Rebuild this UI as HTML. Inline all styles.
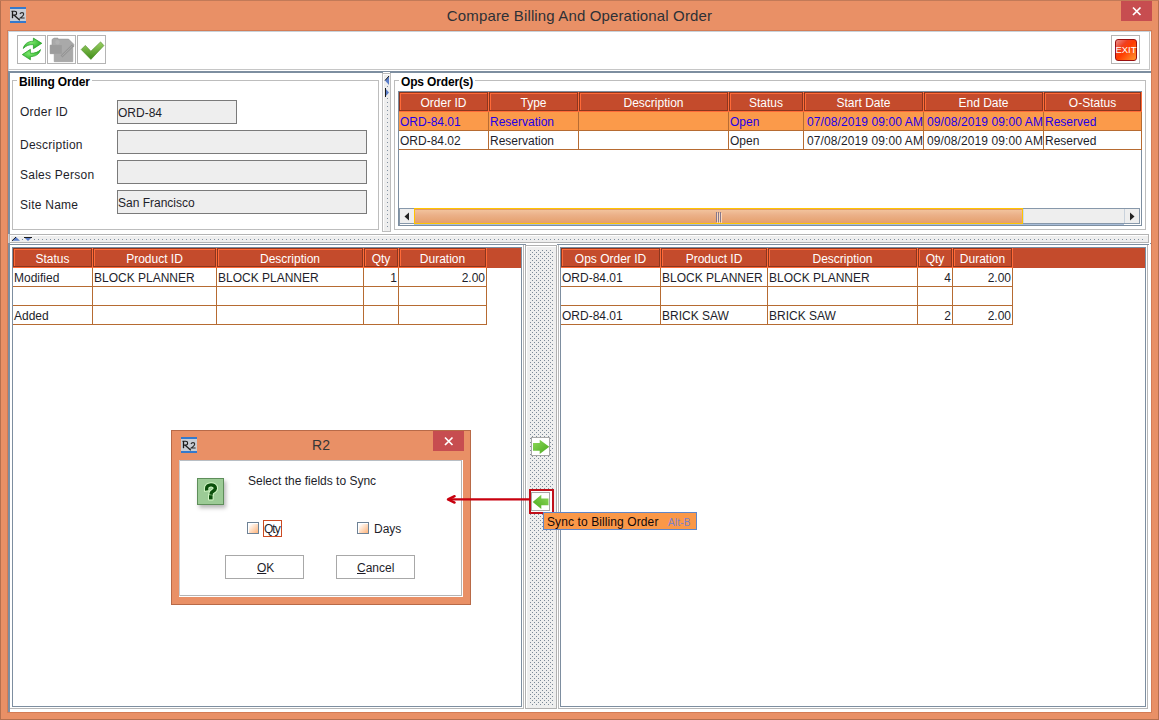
<!DOCTYPE html>
<html><head><meta charset="utf-8">
<style>
*{margin:0;padding:0;box-sizing:border-box}
html,body{width:1159px;height:720px;overflow:hidden}
body{position:relative;background:#E99066;font-family:"Liberation Sans",sans-serif;font-size:12px;color:#1E1E2A}
.a{position:absolute}
.t{font-size:12px;line-height:14px;white-space:nowrap}
.b{font-weight:bold;color:#000;letter-spacing:-0.15px}
</style></head><body>
<div class="a" style="left:0px;top:0px;width:1159px;height:720px;background:#E99066;"></div>
<div class="a" style="left:0px;top:0px;width:1px;height:720px;background:#B5704F;"></div>
<div class="a" style="left:1158px;top:0px;width:1px;height:720px;background:#B5704F;"></div>
<div class="a" style="left:0px;top:719px;width:1159px;height:1px;background:#B5704F;"></div>
<div class="a" style="left:0px;top:0px;width:1159px;height:1px;background:#C27A58;"></div>
<svg class="a" style="left:10px;top:7px" width="16" height="16" viewBox="0 0 16 16">
<rect x="0" y="0" width="16" height="16" fill="#C9CDD4"/>
<rect x="0" y="0" width="16" height="2" fill="#3479CC"/><rect x="0" y="14" width="16" height="2" fill="#3479CC"/>
<path d="M2.5 4 L2.5 11.2" stroke="#1A1A1A" stroke-width="1.3"/>
<path d="M1.5 4.3 L4.6 4.3 Q6.6 4.3 6.6 6.2 Q6.6 8.1 4.6 8.1 L2.5 8.1" fill="none" stroke="#1A1A1A" stroke-width="1.1"/>
<path d="M4.2 8.3 L9.8 13.2" stroke="#1A1A1A" stroke-width="1.2"/>
<path d="M10 7 Q10.4 5.6 12 5.6 Q13.7 5.6 13.7 7.1 Q13.7 8.4 12 9.6 L10.2 11 L14.6 11" fill="none" stroke="#2A2A2A" stroke-width="1.1"/>
</svg>
<div class="a" style="left:0;top:7px;width:1159px;text-align:center;font-size:15px;line-height:18px;color:#2E3036;letter-spacing:0.14px">Compare Billing And Operational Order</div>
<div class="a" style="left:1121px;top:1px;width:31px;height:20px;background:#C74D50;"></div>
<svg class="a" style="left:1121px;top:1px" width="31" height="20"><path d="M12 6.5 L19.5 14 M19.5 6.5 L12 14" stroke="#fff" stroke-width="1.7"/></svg>
<div class="a" style="left:7px;top:30px;width:1145px;height:683px;background:#D47C55;"></div>
<div class="a" style="left:8px;top:31px;width:1143px;height:681px;background:#C8D2DA;"></div>
<div class="a" style="left:9px;top:32px;width:1142px;height:680px;background:#FFFFFF;"></div>
<div class="a" style="left:8px;top:69px;width:1142px;height:1px;background:#C6C6C6;"></div>
<div class="a" style="left:1149px;top:31px;width:1px;height:39px;background:#C6C6C6;"></div>
<div class="a" style="left:8px;top:71px;width:1143px;height:2px;background:#7D8EA0;"></div>
<div class="a" style="left:17px;top:35px;width:29px;height:29px;border:1px solid #B4B4B4;"></div>
<div class="a" style="left:47px;top:35px;width:29px;height:29px;border:1px solid #B4B4B4;"></div>
<div class="a" style="left:77px;top:35px;width:29px;height:29px;border:1px solid #B4B4B4;"></div>
<div class="a" style="left:1111px;top:35px;width:29px;height:29px;border:1px solid #B4B4B4;"></div>
<svg class="a" style="left:18px;top:36px" width="27" height="27" viewBox="0 0 27 27">
<defs><radialGradient id="gr" cx="0.4" cy="0.4" r="0.7"><stop offset="0" stop-color="#7FEA6F"/><stop offset="1" stop-color="#1FA51F"/></radialGradient></defs>
<path d="M15.4 2.1 L23.8 7.3 L15.4 12.7 L15.4 8.6 C11 8.4 8 9.8 5.3 12.5 C6 8.5 9.5 5.3 15.4 5.2 Z" fill="url(#gr)" stroke="#1E9A1E" stroke-width="0.7" stroke-linejoin="round"/>
<path d="M12.4 13.3 L4.3 18.6 L12.4 23.8 L12.4 20.6 C17 20.6 21.5 18.5 22.5 13.6 C20 16.3 17 17.3 12.4 17.3 Z" fill="url(#gr)" stroke="#1E9A1E" stroke-width="0.7" stroke-linejoin="round"/>
</svg>
<svg class="a" style="left:48px;top:36px" width="27" height="27" viewBox="0 0 27 27">
<path d="M4 3.5 L6 2.1 L10 2.1 L10 3.1 L20.6 3.1 L25.8 8.3 L25.8 10.7 L24.8 10.7 L24.8 25.7 L6.2 25.7 L6.2 17.7 L2.1 17.7 L2.1 9.1 L4 9.1 Z" fill="#A9A9A9" stroke="#999" stroke-width="0.6"/>
<rect x="2.1" y="9.1" width="11.7" height="8.6" fill="#9C9C9C"/>
<circle cx="9.5" cy="6.3" r="2.2" fill="#B2B2B2"/>
<path d="M13.5 20.5 L25 9.3" stroke="#959595" stroke-width="2.6"/>
<path d="M14.2 19.8 L24.3 10" stroke="#B0B0B0" stroke-width="0.8"/>
</svg>
<svg class="a" style="left:78px;top:36px" width="27" height="27" viewBox="0 0 27 27">
<defs><linearGradient id="gc" x1="0" y1="0" x2="0" y2="1"><stop offset="0" stop-color="#9ACF62"/><stop offset="1" stop-color="#3F8C18"/></linearGradient></defs>
<path d="M3.2 13.5 L7.3 9.4 L12.9 15.2 L22.6 5.9 L25.9 9.6 L12.9 23.4 Z" fill="url(#gc)" stroke="#4A8A22" stroke-width="0.6" stroke-linejoin="round"/>
</svg>
<div class="a" style="left:1115px;top:39px;width:22px;height:22px;border-radius:3px;background:linear-gradient(135deg,#E89090 0%,#F04020 30%,#FF3C00 50%,#FF9A30 100%);border:1px solid #9A1010"></div>
<div class="a" style="left:1115px;top:43px;width:22px;text-align:center;font-size:9.5px;line-height:14px;color:#fff;letter-spacing:0px">EXIT</div>
<div class="a" style="left:8px;top:71px;width:2px;height:163px;background:#7D8EA0;"></div>
<div class="a" style="left:8px;top:243px;width:2px;height:469px;background:#7D8EA0;"></div>
<div class="a" style="left:12px;top:80px;width:367px;height:150px;border:1px solid #BDBDBD;"></div>
<div class="a t b" style="left:17px;top:75px;padding:0 2px;background:#fff">Billing Order</div>
<div class="a t " style="left:20px;top:105px;letter-spacing:0.25px">Order ID</div>
<div class="a t " style="left:20px;top:138px;letter-spacing:0.25px">Description</div>
<div class="a t " style="left:20px;top:168px;letter-spacing:0.25px">Sales Person</div>
<div class="a t " style="left:20px;top:198px;letter-spacing:0.25px">Site Name</div>
<div class="a" style="left:117px;top:100px;width:120px;height:24px;background:#EEEEEE;border:1px solid #7A7A7A;"></div>
<div class="a" style="left:117px;top:130px;width:250px;height:24px;background:#EEEEEE;border:1px solid #7A7A7A;"></div>
<div class="a" style="left:117px;top:160px;width:250px;height:24px;background:#EEEEEE;border:1px solid #7A7A7A;"></div>
<div class="a" style="left:117px;top:190px;width:250px;height:24px;background:#EEEEEE;border:1px solid #7A7A7A;"></div>
<div class="a t " style="left:118px;top:106px;">ORD-84</div>
<div class="a t " style="left:118px;top:196px;">San Francisco</div>
<div class="a" style="left:382px;top:73px;width:9px;height:159px;background:#EEEEEE;border:1px solid #BDBDBD;box-shadow:inset 1px 1px 0 #FFFFFF;"></div>
<div class="a" style="left:383px;top:72px;width:7px;height:1px;background:#FFFFFF;"></div>
<svg class="a" style="left:383px;top:74px" width="8" height="156"><path d="M6 2 L2 6.5 L6 11 Z" fill="#5A7DC8"/><path d="M6 2 L2 6.5" stroke="#1a1a1a" stroke-width="1"/><path d="M2 14 L6 18.5 L2 23 Z" fill="#5A7DC8"/><path d="M2.5 14 L2.5 23" stroke="#1a1a1a" stroke-width="1"/><rect x="4" y="12" width="1" height="1" fill="#8090A0"/><rect x="4" y="24" width="1" height="1" fill="#8090A0"/><rect x="4" y="28" width="1" height="1" fill="#8090A0"/><rect x="4" y="32" width="1" height="1" fill="#8090A0"/><rect x="4" y="36" width="1" height="1" fill="#8090A0"/><rect x="4" y="40" width="1" height="1" fill="#8090A0"/><rect x="4" y="44" width="1" height="1" fill="#8090A0"/><rect x="4" y="48" width="1" height="1" fill="#8090A0"/><rect x="4" y="52" width="1" height="1" fill="#8090A0"/><rect x="4" y="56" width="1" height="1" fill="#8090A0"/><rect x="4" y="60" width="1" height="1" fill="#8090A0"/><rect x="4" y="64" width="1" height="1" fill="#8090A0"/><rect x="4" y="68" width="1" height="1" fill="#8090A0"/><rect x="4" y="72" width="1" height="1" fill="#8090A0"/><rect x="4" y="76" width="1" height="1" fill="#8090A0"/><rect x="4" y="80" width="1" height="1" fill="#8090A0"/><rect x="4" y="84" width="1" height="1" fill="#8090A0"/><rect x="4" y="88" width="1" height="1" fill="#8090A0"/><rect x="4" y="92" width="1" height="1" fill="#8090A0"/><rect x="4" y="96" width="1" height="1" fill="#8090A0"/><rect x="4" y="100" width="1" height="1" fill="#8090A0"/><rect x="4" y="104" width="1" height="1" fill="#8090A0"/><rect x="4" y="108" width="1" height="1" fill="#8090A0"/><rect x="4" y="112" width="1" height="1" fill="#8090A0"/><rect x="4" y="116" width="1" height="1" fill="#8090A0"/><rect x="4" y="120" width="1" height="1" fill="#8090A0"/><rect x="4" y="124" width="1" height="1" fill="#8090A0"/><rect x="4" y="128" width="1" height="1" fill="#8090A0"/><rect x="4" y="132" width="1" height="1" fill="#8090A0"/><rect x="4" y="136" width="1" height="1" fill="#8090A0"/><rect x="4" y="140" width="1" height="1" fill="#8090A0"/><rect x="4" y="144" width="1" height="1" fill="#8090A0"/><rect x="4" y="148" width="1" height="1" fill="#8090A0"/><rect x="4" y="152" width="1" height="1" fill="#8090A0"/></svg>
<div class="a" style="left:394px;top:80px;width:752px;height:150px;border:1px solid #BDBDBD;"></div>
<div class="a t b" style="left:399px;top:75px;padding:0 2px;background:#fff">Ops Order(s)</div>
<div class="a" style="left:9px;top:234px;width:1140px;height:9px;background:#EEEEEE;border:1px solid #B4B4B4;box-shadow:inset 1px 1px 0 #FFFFFF;"></div>
<div class="a" style="left:8px;top:244px;width:518px;height:1px;background:#7D8EA0;"></div>
<div class="a" style="left:557px;top:244px;width:592px;height:1px;background:#7D8EA0;"></div>
<div class="a" style="left:1150px;top:243px;width:1px;height:1px;background:#7D8EA0;"></div>
<svg class="a" style="left:9px;top:234px" width="1140" height="9"><path d="M3 6.8 L7 3 L11 6.8 Z" fill="#5A7DC8"/><path d="M3 6.8 L7 3" stroke="#1a1a1a" stroke-width="1"/><path d="M15 3.2 L19 7 L23 3.2 Z" fill="#5A7DC8"/><path d="M15 3.5 L23 3.5" stroke="#1a1a1a" stroke-width="1"/><rect x="13" y="5" width="1" height="1" fill="#8090A0"/><rect x="25" y="5" width="1" height="1" fill="#8090A0"/><rect x="29" y="5" width="1" height="1" fill="#8090A0"/><rect x="33" y="5" width="1" height="1" fill="#8090A0"/><rect x="37" y="5" width="1" height="1" fill="#8090A0"/><rect x="41" y="5" width="1" height="1" fill="#8090A0"/><rect x="45" y="5" width="1" height="1" fill="#8090A0"/><rect x="49" y="5" width="1" height="1" fill="#8090A0"/><rect x="53" y="5" width="1" height="1" fill="#8090A0"/><rect x="57" y="5" width="1" height="1" fill="#8090A0"/><rect x="61" y="5" width="1" height="1" fill="#8090A0"/><rect x="65" y="5" width="1" height="1" fill="#8090A0"/><rect x="69" y="5" width="1" height="1" fill="#8090A0"/><rect x="73" y="5" width="1" height="1" fill="#8090A0"/><rect x="77" y="5" width="1" height="1" fill="#8090A0"/><rect x="81" y="5" width="1" height="1" fill="#8090A0"/><rect x="85" y="5" width="1" height="1" fill="#8090A0"/><rect x="89" y="5" width="1" height="1" fill="#8090A0"/><rect x="93" y="5" width="1" height="1" fill="#8090A0"/><rect x="97" y="5" width="1" height="1" fill="#8090A0"/><rect x="101" y="5" width="1" height="1" fill="#8090A0"/><rect x="105" y="5" width="1" height="1" fill="#8090A0"/><rect x="109" y="5" width="1" height="1" fill="#8090A0"/><rect x="113" y="5" width="1" height="1" fill="#8090A0"/><rect x="117" y="5" width="1" height="1" fill="#8090A0"/><rect x="121" y="5" width="1" height="1" fill="#8090A0"/><rect x="125" y="5" width="1" height="1" fill="#8090A0"/><rect x="129" y="5" width="1" height="1" fill="#8090A0"/><rect x="133" y="5" width="1" height="1" fill="#8090A0"/><rect x="137" y="5" width="1" height="1" fill="#8090A0"/><rect x="141" y="5" width="1" height="1" fill="#8090A0"/><rect x="145" y="5" width="1" height="1" fill="#8090A0"/><rect x="149" y="5" width="1" height="1" fill="#8090A0"/><rect x="153" y="5" width="1" height="1" fill="#8090A0"/><rect x="157" y="5" width="1" height="1" fill="#8090A0"/><rect x="161" y="5" width="1" height="1" fill="#8090A0"/><rect x="165" y="5" width="1" height="1" fill="#8090A0"/><rect x="169" y="5" width="1" height="1" fill="#8090A0"/><rect x="173" y="5" width="1" height="1" fill="#8090A0"/><rect x="177" y="5" width="1" height="1" fill="#8090A0"/><rect x="181" y="5" width="1" height="1" fill="#8090A0"/><rect x="185" y="5" width="1" height="1" fill="#8090A0"/><rect x="189" y="5" width="1" height="1" fill="#8090A0"/><rect x="193" y="5" width="1" height="1" fill="#8090A0"/><rect x="197" y="5" width="1" height="1" fill="#8090A0"/><rect x="201" y="5" width="1" height="1" fill="#8090A0"/><rect x="205" y="5" width="1" height="1" fill="#8090A0"/><rect x="209" y="5" width="1" height="1" fill="#8090A0"/><rect x="213" y="5" width="1" height="1" fill="#8090A0"/><rect x="217" y="5" width="1" height="1" fill="#8090A0"/><rect x="221" y="5" width="1" height="1" fill="#8090A0"/><rect x="225" y="5" width="1" height="1" fill="#8090A0"/><rect x="229" y="5" width="1" height="1" fill="#8090A0"/><rect x="233" y="5" width="1" height="1" fill="#8090A0"/><rect x="237" y="5" width="1" height="1" fill="#8090A0"/><rect x="241" y="5" width="1" height="1" fill="#8090A0"/><rect x="245" y="5" width="1" height="1" fill="#8090A0"/><rect x="249" y="5" width="1" height="1" fill="#8090A0"/><rect x="253" y="5" width="1" height="1" fill="#8090A0"/><rect x="257" y="5" width="1" height="1" fill="#8090A0"/><rect x="261" y="5" width="1" height="1" fill="#8090A0"/><rect x="265" y="5" width="1" height="1" fill="#8090A0"/><rect x="269" y="5" width="1" height="1" fill="#8090A0"/><rect x="273" y="5" width="1" height="1" fill="#8090A0"/><rect x="277" y="5" width="1" height="1" fill="#8090A0"/><rect x="281" y="5" width="1" height="1" fill="#8090A0"/><rect x="285" y="5" width="1" height="1" fill="#8090A0"/><rect x="289" y="5" width="1" height="1" fill="#8090A0"/><rect x="293" y="5" width="1" height="1" fill="#8090A0"/><rect x="297" y="5" width="1" height="1" fill="#8090A0"/><rect x="301" y="5" width="1" height="1" fill="#8090A0"/><rect x="305" y="5" width="1" height="1" fill="#8090A0"/><rect x="309" y="5" width="1" height="1" fill="#8090A0"/><rect x="313" y="5" width="1" height="1" fill="#8090A0"/><rect x="317" y="5" width="1" height="1" fill="#8090A0"/><rect x="321" y="5" width="1" height="1" fill="#8090A0"/><rect x="325" y="5" width="1" height="1" fill="#8090A0"/><rect x="329" y="5" width="1" height="1" fill="#8090A0"/><rect x="333" y="5" width="1" height="1" fill="#8090A0"/><rect x="337" y="5" width="1" height="1" fill="#8090A0"/><rect x="341" y="5" width="1" height="1" fill="#8090A0"/><rect x="345" y="5" width="1" height="1" fill="#8090A0"/><rect x="349" y="5" width="1" height="1" fill="#8090A0"/><rect x="353" y="5" width="1" height="1" fill="#8090A0"/><rect x="357" y="5" width="1" height="1" fill="#8090A0"/><rect x="361" y="5" width="1" height="1" fill="#8090A0"/><rect x="365" y="5" width="1" height="1" fill="#8090A0"/><rect x="369" y="5" width="1" height="1" fill="#8090A0"/><rect x="373" y="5" width="1" height="1" fill="#8090A0"/><rect x="377" y="5" width="1" height="1" fill="#8090A0"/><rect x="381" y="5" width="1" height="1" fill="#8090A0"/><rect x="385" y="5" width="1" height="1" fill="#8090A0"/><rect x="389" y="5" width="1" height="1" fill="#8090A0"/><rect x="393" y="5" width="1" height="1" fill="#8090A0"/><rect x="397" y="5" width="1" height="1" fill="#8090A0"/><rect x="401" y="5" width="1" height="1" fill="#8090A0"/><rect x="405" y="5" width="1" height="1" fill="#8090A0"/><rect x="409" y="5" width="1" height="1" fill="#8090A0"/><rect x="413" y="5" width="1" height="1" fill="#8090A0"/><rect x="417" y="5" width="1" height="1" fill="#8090A0"/><rect x="421" y="5" width="1" height="1" fill="#8090A0"/><rect x="425" y="5" width="1" height="1" fill="#8090A0"/><rect x="429" y="5" width="1" height="1" fill="#8090A0"/><rect x="433" y="5" width="1" height="1" fill="#8090A0"/><rect x="437" y="5" width="1" height="1" fill="#8090A0"/><rect x="441" y="5" width="1" height="1" fill="#8090A0"/><rect x="445" y="5" width="1" height="1" fill="#8090A0"/><rect x="449" y="5" width="1" height="1" fill="#8090A0"/><rect x="453" y="5" width="1" height="1" fill="#8090A0"/><rect x="457" y="5" width="1" height="1" fill="#8090A0"/><rect x="461" y="5" width="1" height="1" fill="#8090A0"/><rect x="465" y="5" width="1" height="1" fill="#8090A0"/><rect x="469" y="5" width="1" height="1" fill="#8090A0"/><rect x="473" y="5" width="1" height="1" fill="#8090A0"/><rect x="477" y="5" width="1" height="1" fill="#8090A0"/><rect x="481" y="5" width="1" height="1" fill="#8090A0"/><rect x="485" y="5" width="1" height="1" fill="#8090A0"/><rect x="489" y="5" width="1" height="1" fill="#8090A0"/><rect x="493" y="5" width="1" height="1" fill="#8090A0"/><rect x="497" y="5" width="1" height="1" fill="#8090A0"/><rect x="501" y="5" width="1" height="1" fill="#8090A0"/><rect x="505" y="5" width="1" height="1" fill="#8090A0"/><rect x="509" y="5" width="1" height="1" fill="#8090A0"/><rect x="513" y="5" width="1" height="1" fill="#8090A0"/><rect x="517" y="5" width="1" height="1" fill="#8090A0"/><rect x="521" y="5" width="1" height="1" fill="#8090A0"/><rect x="525" y="5" width="1" height="1" fill="#8090A0"/><rect x="529" y="5" width="1" height="1" fill="#8090A0"/><rect x="533" y="5" width="1" height="1" fill="#8090A0"/><rect x="537" y="5" width="1" height="1" fill="#8090A0"/><rect x="541" y="5" width="1" height="1" fill="#8090A0"/><rect x="545" y="5" width="1" height="1" fill="#8090A0"/><rect x="549" y="5" width="1" height="1" fill="#8090A0"/><rect x="553" y="5" width="1" height="1" fill="#8090A0"/><rect x="557" y="5" width="1" height="1" fill="#8090A0"/><rect x="561" y="5" width="1" height="1" fill="#8090A0"/><rect x="565" y="5" width="1" height="1" fill="#8090A0"/><rect x="569" y="5" width="1" height="1" fill="#8090A0"/><rect x="573" y="5" width="1" height="1" fill="#8090A0"/><rect x="577" y="5" width="1" height="1" fill="#8090A0"/><rect x="581" y="5" width="1" height="1" fill="#8090A0"/><rect x="585" y="5" width="1" height="1" fill="#8090A0"/><rect x="589" y="5" width="1" height="1" fill="#8090A0"/><rect x="593" y="5" width="1" height="1" fill="#8090A0"/><rect x="597" y="5" width="1" height="1" fill="#8090A0"/><rect x="601" y="5" width="1" height="1" fill="#8090A0"/><rect x="605" y="5" width="1" height="1" fill="#8090A0"/><rect x="609" y="5" width="1" height="1" fill="#8090A0"/><rect x="613" y="5" width="1" height="1" fill="#8090A0"/><rect x="617" y="5" width="1" height="1" fill="#8090A0"/><rect x="621" y="5" width="1" height="1" fill="#8090A0"/><rect x="625" y="5" width="1" height="1" fill="#8090A0"/><rect x="629" y="5" width="1" height="1" fill="#8090A0"/><rect x="633" y="5" width="1" height="1" fill="#8090A0"/><rect x="637" y="5" width="1" height="1" fill="#8090A0"/><rect x="641" y="5" width="1" height="1" fill="#8090A0"/><rect x="645" y="5" width="1" height="1" fill="#8090A0"/><rect x="649" y="5" width="1" height="1" fill="#8090A0"/><rect x="653" y="5" width="1" height="1" fill="#8090A0"/><rect x="657" y="5" width="1" height="1" fill="#8090A0"/><rect x="661" y="5" width="1" height="1" fill="#8090A0"/><rect x="665" y="5" width="1" height="1" fill="#8090A0"/><rect x="669" y="5" width="1" height="1" fill="#8090A0"/><rect x="673" y="5" width="1" height="1" fill="#8090A0"/><rect x="677" y="5" width="1" height="1" fill="#8090A0"/><rect x="681" y="5" width="1" height="1" fill="#8090A0"/><rect x="685" y="5" width="1" height="1" fill="#8090A0"/><rect x="689" y="5" width="1" height="1" fill="#8090A0"/><rect x="693" y="5" width="1" height="1" fill="#8090A0"/><rect x="697" y="5" width="1" height="1" fill="#8090A0"/><rect x="701" y="5" width="1" height="1" fill="#8090A0"/><rect x="705" y="5" width="1" height="1" fill="#8090A0"/><rect x="709" y="5" width="1" height="1" fill="#8090A0"/><rect x="713" y="5" width="1" height="1" fill="#8090A0"/><rect x="717" y="5" width="1" height="1" fill="#8090A0"/><rect x="721" y="5" width="1" height="1" fill="#8090A0"/><rect x="725" y="5" width="1" height="1" fill="#8090A0"/><rect x="729" y="5" width="1" height="1" fill="#8090A0"/><rect x="733" y="5" width="1" height="1" fill="#8090A0"/><rect x="737" y="5" width="1" height="1" fill="#8090A0"/><rect x="741" y="5" width="1" height="1" fill="#8090A0"/><rect x="745" y="5" width="1" height="1" fill="#8090A0"/><rect x="749" y="5" width="1" height="1" fill="#8090A0"/><rect x="753" y="5" width="1" height="1" fill="#8090A0"/><rect x="757" y="5" width="1" height="1" fill="#8090A0"/><rect x="761" y="5" width="1" height="1" fill="#8090A0"/><rect x="765" y="5" width="1" height="1" fill="#8090A0"/><rect x="769" y="5" width="1" height="1" fill="#8090A0"/><rect x="773" y="5" width="1" height="1" fill="#8090A0"/><rect x="777" y="5" width="1" height="1" fill="#8090A0"/><rect x="781" y="5" width="1" height="1" fill="#8090A0"/><rect x="785" y="5" width="1" height="1" fill="#8090A0"/><rect x="789" y="5" width="1" height="1" fill="#8090A0"/><rect x="793" y="5" width="1" height="1" fill="#8090A0"/><rect x="797" y="5" width="1" height="1" fill="#8090A0"/><rect x="801" y="5" width="1" height="1" fill="#8090A0"/><rect x="805" y="5" width="1" height="1" fill="#8090A0"/><rect x="809" y="5" width="1" height="1" fill="#8090A0"/><rect x="813" y="5" width="1" height="1" fill="#8090A0"/><rect x="817" y="5" width="1" height="1" fill="#8090A0"/><rect x="821" y="5" width="1" height="1" fill="#8090A0"/><rect x="825" y="5" width="1" height="1" fill="#8090A0"/><rect x="829" y="5" width="1" height="1" fill="#8090A0"/><rect x="833" y="5" width="1" height="1" fill="#8090A0"/><rect x="837" y="5" width="1" height="1" fill="#8090A0"/><rect x="841" y="5" width="1" height="1" fill="#8090A0"/><rect x="845" y="5" width="1" height="1" fill="#8090A0"/><rect x="849" y="5" width="1" height="1" fill="#8090A0"/><rect x="853" y="5" width="1" height="1" fill="#8090A0"/><rect x="857" y="5" width="1" height="1" fill="#8090A0"/><rect x="861" y="5" width="1" height="1" fill="#8090A0"/><rect x="865" y="5" width="1" height="1" fill="#8090A0"/><rect x="869" y="5" width="1" height="1" fill="#8090A0"/><rect x="873" y="5" width="1" height="1" fill="#8090A0"/><rect x="877" y="5" width="1" height="1" fill="#8090A0"/><rect x="881" y="5" width="1" height="1" fill="#8090A0"/><rect x="885" y="5" width="1" height="1" fill="#8090A0"/><rect x="889" y="5" width="1" height="1" fill="#8090A0"/><rect x="893" y="5" width="1" height="1" fill="#8090A0"/><rect x="897" y="5" width="1" height="1" fill="#8090A0"/><rect x="901" y="5" width="1" height="1" fill="#8090A0"/><rect x="905" y="5" width="1" height="1" fill="#8090A0"/><rect x="909" y="5" width="1" height="1" fill="#8090A0"/><rect x="913" y="5" width="1" height="1" fill="#8090A0"/><rect x="917" y="5" width="1" height="1" fill="#8090A0"/><rect x="921" y="5" width="1" height="1" fill="#8090A0"/><rect x="925" y="5" width="1" height="1" fill="#8090A0"/><rect x="929" y="5" width="1" height="1" fill="#8090A0"/><rect x="933" y="5" width="1" height="1" fill="#8090A0"/><rect x="937" y="5" width="1" height="1" fill="#8090A0"/><rect x="941" y="5" width="1" height="1" fill="#8090A0"/><rect x="945" y="5" width="1" height="1" fill="#8090A0"/><rect x="949" y="5" width="1" height="1" fill="#8090A0"/><rect x="953" y="5" width="1" height="1" fill="#8090A0"/><rect x="957" y="5" width="1" height="1" fill="#8090A0"/><rect x="961" y="5" width="1" height="1" fill="#8090A0"/><rect x="965" y="5" width="1" height="1" fill="#8090A0"/><rect x="969" y="5" width="1" height="1" fill="#8090A0"/><rect x="973" y="5" width="1" height="1" fill="#8090A0"/><rect x="977" y="5" width="1" height="1" fill="#8090A0"/><rect x="981" y="5" width="1" height="1" fill="#8090A0"/><rect x="985" y="5" width="1" height="1" fill="#8090A0"/><rect x="989" y="5" width="1" height="1" fill="#8090A0"/><rect x="993" y="5" width="1" height="1" fill="#8090A0"/><rect x="997" y="5" width="1" height="1" fill="#8090A0"/><rect x="1001" y="5" width="1" height="1" fill="#8090A0"/><rect x="1005" y="5" width="1" height="1" fill="#8090A0"/><rect x="1009" y="5" width="1" height="1" fill="#8090A0"/><rect x="1013" y="5" width="1" height="1" fill="#8090A0"/><rect x="1017" y="5" width="1" height="1" fill="#8090A0"/><rect x="1021" y="5" width="1" height="1" fill="#8090A0"/><rect x="1025" y="5" width="1" height="1" fill="#8090A0"/><rect x="1029" y="5" width="1" height="1" fill="#8090A0"/><rect x="1033" y="5" width="1" height="1" fill="#8090A0"/><rect x="1037" y="5" width="1" height="1" fill="#8090A0"/><rect x="1041" y="5" width="1" height="1" fill="#8090A0"/><rect x="1045" y="5" width="1" height="1" fill="#8090A0"/><rect x="1049" y="5" width="1" height="1" fill="#8090A0"/><rect x="1053" y="5" width="1" height="1" fill="#8090A0"/><rect x="1057" y="5" width="1" height="1" fill="#8090A0"/><rect x="1061" y="5" width="1" height="1" fill="#8090A0"/><rect x="1065" y="5" width="1" height="1" fill="#8090A0"/><rect x="1069" y="5" width="1" height="1" fill="#8090A0"/><rect x="1073" y="5" width="1" height="1" fill="#8090A0"/><rect x="1077" y="5" width="1" height="1" fill="#8090A0"/><rect x="1081" y="5" width="1" height="1" fill="#8090A0"/><rect x="1085" y="5" width="1" height="1" fill="#8090A0"/><rect x="1089" y="5" width="1" height="1" fill="#8090A0"/><rect x="1093" y="5" width="1" height="1" fill="#8090A0"/><rect x="1097" y="5" width="1" height="1" fill="#8090A0"/><rect x="1101" y="5" width="1" height="1" fill="#8090A0"/><rect x="1105" y="5" width="1" height="1" fill="#8090A0"/><rect x="1109" y="5" width="1" height="1" fill="#8090A0"/><rect x="1113" y="5" width="1" height="1" fill="#8090A0"/><rect x="1117" y="5" width="1" height="1" fill="#8090A0"/><rect x="1121" y="5" width="1" height="1" fill="#8090A0"/><rect x="1125" y="5" width="1" height="1" fill="#8090A0"/><rect x="1129" y="5" width="1" height="1" fill="#8090A0"/><rect x="1133" y="5" width="1" height="1" fill="#8090A0"/></svg>
<div class="a" style="left:398px;top:91px;width:744px;height:1px;background:#7D8EA0;"></div>
<div class="a" style="left:398px;top:91px;width:1px;height:135px;background:#7D8EA0;"></div>
<div class="a" style="left:398px;top:225px;width:744px;height:1px;background:#7D8EA0;"></div>
<div class="a" style="left:1141px;top:91px;width:1px;height:135px;background:#7D8EA0;"></div>
<div class="a" style="left:399px;top:92px;width:742px;height:20px;background:#C44B2C;"></div>
<div class="a" style="left:399px;top:92px;width:743px;height:20px;background:#FF6A38;"></div>
<div class="a" style="left:399px;top:92px;width:89px;height:19px;background:#C44B2C;border:1px solid #8C361E;box-shadow:inset 1px 1px 0 #FF6A38;"></div>
<div class="a t" style="left:399px;top:96px;width:89px;text-align:center;color:#fff">Order ID</div>
<div class="a" style="left:489px;top:92px;width:89px;height:19px;background:#C44B2C;border:1px solid #8C361E;box-shadow:inset 1px 1px 0 #FF6A38;"></div>
<div class="a t" style="left:489px;top:96px;width:89px;text-align:center;color:#fff">Type</div>
<div class="a" style="left:579px;top:92px;width:149px;height:19px;background:#C44B2C;border:1px solid #8C361E;box-shadow:inset 1px 1px 0 #FF6A38;"></div>
<div class="a t" style="left:579px;top:96px;width:149px;text-align:center;color:#fff">Description</div>
<div class="a" style="left:729px;top:92px;width:74px;height:19px;background:#C44B2C;border:1px solid #8C361E;box-shadow:inset 1px 1px 0 #FF6A38;"></div>
<div class="a t" style="left:729px;top:96px;width:74px;text-align:center;color:#fff">Status</div>
<div class="a" style="left:804px;top:92px;width:119px;height:19px;background:#C44B2C;border:1px solid #8C361E;box-shadow:inset 1px 1px 0 #FF6A38;"></div>
<div class="a t" style="left:804px;top:96px;width:119px;text-align:center;color:#fff">Start Date</div>
<div class="a" style="left:924px;top:92px;width:119px;height:19px;background:#C44B2C;border:1px solid #8C361E;box-shadow:inset 1px 1px 0 #FF6A38;"></div>
<div class="a t" style="left:924px;top:96px;width:119px;text-align:center;color:#fff">End Date</div>
<div class="a" style="left:1044px;top:92px;width:97px;height:19px;background:#C44B2C;border:1px solid #8C361E;box-shadow:inset 1px 1px 0 #FF6A38;"></div>
<div class="a t" style="left:1044px;top:96px;width:97px;text-align:center;color:#fff">O-Status</div>
<div class="a" style="left:399px;top:112px;width:743px;height:18px;background:#FB9A4A;"></div>
<div class="a t " style="left:400px;top:115px;color:#2200E8">ORD-84.01</div>
<div class="a t " style="left:490px;top:115px;color:#2200E8">Reservation</div>
<div class="a t " style="left:730px;top:115px;color:#2200E8">Open</div>
<div class="a t " style="left:807px;top:115px;color:#2200E8;letter-spacing:0.1px">07/08/2019 09:00 AM</div>
<div class="a t " style="left:927px;top:115px;color:#2200E8;letter-spacing:0.1px">09/08/2019 09:00 AM</div>
<div class="a t " style="left:1045px;top:115px;color:#2200E8">Reserved</div>
<div class="a" style="left:399px;top:130px;width:743px;height:1px;background:#B66B32;"></div>
<div class="a t " style="left:400px;top:134px;color:#1E1E2A">ORD-84.02</div>
<div class="a t " style="left:490px;top:134px;color:#1E1E2A">Reservation</div>
<div class="a t " style="left:730px;top:134px;color:#1E1E2A">Open</div>
<div class="a t " style="left:807px;top:134px;color:#1E1E2A;letter-spacing:0.1px">07/08/2019 09:00 AM</div>
<div class="a t " style="left:927px;top:134px;color:#1E1E2A;letter-spacing:0.1px">09/08/2019 09:00 AM</div>
<div class="a t " style="left:1045px;top:134px;color:#1E1E2A">Reserved</div>
<div class="a" style="left:399px;top:149px;width:743px;height:1px;background:#B66B32;"></div>
<div class="a" style="left:488px;top:112px;width:1px;height:38px;background:#B66B32;"></div>
<div class="a" style="left:578px;top:112px;width:1px;height:38px;background:#B66B32;"></div>
<div class="a" style="left:728px;top:112px;width:1px;height:38px;background:#B66B32;"></div>
<div class="a" style="left:803px;top:112px;width:1px;height:38px;background:#B66B32;"></div>
<div class="a" style="left:923px;top:112px;width:1px;height:38px;background:#B66B32;"></div>
<div class="a" style="left:1043px;top:112px;width:1px;height:38px;background:#B66B32;"></div>
<div class="a" style="left:1141px;top:112px;width:1px;height:38px;background:#B66B32;"></div>
<div class="a" style="left:523px;top:245px;width:1px;height:464px;background:#B8B8B8;"></div>
<div class="a" style="left:10px;top:708px;width:514px;height:1px;background:#B8B8B8;"></div>
<div class="a" style="left:12px;top:247px;width:510px;height:1px;background:#7D8EA0;"></div>
<div class="a" style="left:12px;top:247px;width:1px;height:460px;background:#7D8EA0;"></div>
<div class="a" style="left:12px;top:706px;width:510px;height:1px;background:#7D8EA0;"></div>
<div class="a" style="left:521px;top:247px;width:1px;height:460px;background:#7D8EA0;"></div>
<div class="a" style="left:13px;top:248px;width:508px;height:20px;background:#C44B2C;"></div>
<div class="a" style="left:13px;top:248px;width:474px;height:20px;background:#FF6A38;"></div>
<div class="a" style="left:13px;top:248px;width:79px;height:19px;background:#C44B2C;border:1px solid #8C361E;box-shadow:inset 1px 1px 0 #FF6A38;"></div>
<div class="a t" style="left:13px;top:252px;width:79px;text-align:center;color:#fff">Status</div>
<div class="a" style="left:93px;top:248px;width:123px;height:19px;background:#C44B2C;border:1px solid #8C361E;box-shadow:inset 1px 1px 0 #FF6A38;"></div>
<div class="a t" style="left:93px;top:252px;width:123px;text-align:center;color:#fff">Product ID</div>
<div class="a" style="left:217px;top:248px;width:146px;height:19px;background:#C44B2C;border:1px solid #8C361E;box-shadow:inset 1px 1px 0 #FF6A38;"></div>
<div class="a t" style="left:217px;top:252px;width:146px;text-align:center;color:#fff">Description</div>
<div class="a" style="left:364px;top:248px;width:34px;height:19px;background:#C44B2C;border:1px solid #8C361E;box-shadow:inset 1px 1px 0 #FF6A38;"></div>
<div class="a t" style="left:364px;top:252px;width:34px;text-align:center;color:#fff">Qty</div>
<div class="a" style="left:399px;top:248px;width:87px;height:19px;background:#C44B2C;border:1px solid #8C361E;box-shadow:inset 1px 1px 0 #FF6A38;"></div>
<div class="a t" style="left:399px;top:252px;width:87px;text-align:center;color:#fff">Duration</div>
<div class="a t " style="left:14px;top:271px;color:#1E1E2A">Modified</div>
<div class="a t " style="left:94px;top:271px;color:#1E1E2A">BLOCK PLANNER</div>
<div class="a t " style="left:218px;top:271px;color:#1E1E2A">BLOCK PLANNER</div>
<div class="a t" style="right:762px;top:271px;color:#1E1E2A">1</div>
<div class="a t" style="right:674px;top:271px;color:#1E1E2A">2.00</div>
<div class="a" style="left:13px;top:286px;width:474px;height:1px;background:#B66B32;"></div>
<div class="a" style="left:13px;top:305px;width:474px;height:1px;background:#B66B32;"></div>
<div class="a t " style="left:14px;top:309px;color:#1E1E2A">Added</div>
<div class="a" style="left:13px;top:324px;width:474px;height:1px;background:#B66B32;"></div>
<div class="a" style="left:92px;top:268px;width:1px;height:57px;background:#B66B32;"></div>
<div class="a" style="left:216px;top:268px;width:1px;height:57px;background:#B66B32;"></div>
<div class="a" style="left:363px;top:268px;width:1px;height:57px;background:#B66B32;"></div>
<div class="a" style="left:398px;top:268px;width:1px;height:57px;background:#B66B32;"></div>
<div class="a" style="left:486px;top:268px;width:1px;height:57px;background:#B66B32;"></div>
<div class="a" style="left:558px;top:245px;width:1px;height:464px;background:#B8B8B8;"></div>
<div class="a" style="left:558px;top:708px;width:590px;height:1px;background:#B8B8B8;"></div>
<div class="a" style="left:1147px;top:245px;width:1px;height:464px;background:#B8B8B8;"></div>
<div class="a" style="left:560px;top:247px;width:586px;height:1px;background:#7D8EA0;"></div>
<div class="a" style="left:560px;top:247px;width:1px;height:460px;background:#7D8EA0;"></div>
<div class="a" style="left:560px;top:706px;width:586px;height:1px;background:#7D8EA0;"></div>
<div class="a" style="left:1145px;top:247px;width:1px;height:460px;background:#7D8EA0;"></div>
<div class="a" style="left:561px;top:248px;width:584px;height:20px;background:#C44B2C;"></div>
<div class="a" style="left:561px;top:248px;width:452px;height:20px;background:#FF6A38;"></div>
<div class="a" style="left:561px;top:248px;width:99px;height:19px;background:#C44B2C;border:1px solid #8C361E;box-shadow:inset 1px 1px 0 #FF6A38;"></div>
<div class="a t" style="left:561px;top:252px;width:99px;text-align:center;color:#fff">Ops Order ID</div>
<div class="a" style="left:661px;top:248px;width:106px;height:19px;background:#C44B2C;border:1px solid #8C361E;box-shadow:inset 1px 1px 0 #FF6A38;"></div>
<div class="a t" style="left:661px;top:252px;width:106px;text-align:center;color:#fff">Product ID</div>
<div class="a" style="left:768px;top:248px;width:149px;height:19px;background:#C44B2C;border:1px solid #8C361E;box-shadow:inset 1px 1px 0 #FF6A38;"></div>
<div class="a t" style="left:768px;top:252px;width:149px;text-align:center;color:#fff">Description</div>
<div class="a" style="left:918px;top:248px;width:34px;height:19px;background:#C44B2C;border:1px solid #8C361E;box-shadow:inset 1px 1px 0 #FF6A38;"></div>
<div class="a t" style="left:918px;top:252px;width:34px;text-align:center;color:#fff">Qty</div>
<div class="a" style="left:953px;top:248px;width:59px;height:19px;background:#C44B2C;border:1px solid #8C361E;box-shadow:inset 1px 1px 0 #FF6A38;"></div>
<div class="a t" style="left:953px;top:252px;width:59px;text-align:center;color:#fff">Duration</div>
<div class="a t " style="left:562px;top:271px;color:#1E1E2A">ORD-84.01</div>
<div class="a t " style="left:662px;top:271px;color:#1E1E2A">BLOCK PLANNER</div>
<div class="a t " style="left:769px;top:271px;color:#1E1E2A">BLOCK PLANNER</div>
<div class="a t" style="right:208px;top:271px;color:#1E1E2A">4</div>
<div class="a t" style="right:148px;top:271px;color:#1E1E2A">2.00</div>
<div class="a" style="left:561px;top:286px;width:452px;height:1px;background:#B66B32;"></div>
<div class="a" style="left:561px;top:305px;width:452px;height:1px;background:#B66B32;"></div>
<div class="a t " style="left:562px;top:309px;color:#1E1E2A">ORD-84.01</div>
<div class="a t " style="left:662px;top:309px;color:#1E1E2A">BRICK SAW</div>
<div class="a t " style="left:769px;top:309px;color:#1E1E2A">BRICK SAW</div>
<div class="a t" style="right:208px;top:309px;color:#1E1E2A">2</div>
<div class="a t" style="right:148px;top:309px;color:#1E1E2A">2.00</div>
<div class="a" style="left:561px;top:324px;width:452px;height:1px;background:#B66B32;"></div>
<div class="a" style="left:660px;top:268px;width:1px;height:57px;background:#B66B32;"></div>
<div class="a" style="left:767px;top:268px;width:1px;height:57px;background:#B66B32;"></div>
<div class="a" style="left:917px;top:268px;width:1px;height:57px;background:#B66B32;"></div>
<div class="a" style="left:952px;top:268px;width:1px;height:57px;background:#B66B32;"></div>
<div class="a" style="left:1012px;top:268px;width:1px;height:57px;background:#B66B32;"></div>
<div class="a" style="left:525px;top:245px;width:32px;height:464px;background:#EEEEEE;border:1px solid #B0B0B0;box-shadow:inset 1px 1px 0 #FFFFFF;"></div>
<svg class="a" style="left:526px;top:246px" width="30" height="462"><defs><pattern id="dp" x="0" y="0" width="4" height="4" patternUnits="userSpaceOnUse"><rect x="0" y="0" width="1" height="1" fill="#7C8A98"/><rect x="2" y="2" width="1" height="1" fill="#7C8A98"/></pattern></defs><rect x="4" y="4" width="24" height="456" fill="url(#dp)"/></svg>
<div class="a" style="left:399px;top:208px;width:742px;height:17px;background:#FFFFFF;"></div>
<div class="a" style="left:399px;top:208px;width:741px;height:16px;background:#EEEEEE;"></div>
<div class="a" style="left:399px;top:208px;width:741px;height:1px;background:#8798AA;"></div>
<div class="a" style="left:399px;top:223px;width:741px;height:1px;background:#8798AA;"></div>
<div class="a" style="left:414px;top:224px;width:710px;height:1px;background:#A9BEDA;"></div>
<div class="a" style="left:1139px;top:208px;width:1px;height:16px;background:#8798AA;"></div>
<div class="a" style="left:399px;top:208px;width:1px;height:17px;background:#8798AA;"></div>
<svg class="a" style="left:399px;top:208px" width="15" height="16"><path d="M5.5 8.5 L10 4.5 L10 12.5 Z" fill="#222"/></svg>
<div class="a" style="left:1124px;top:209px;width:1px;height:14px;background:#C9D2DC;"></div>
<svg class="a" style="left:1124px;top:208px" width="15" height="16"><path d="M10.5 8.5 L6 4.5 L6 12.5 Z" fill="#222"/></svg>
<div class="a" style="left:414px;top:208px;width:609px;height:16px;background:linear-gradient(to bottom,#F3C6A0 0%,#EBB088 45%,#E5A06C 100%);border:1px solid #FFC400;box-shadow:inset 0 1px 0 #E39866;"></div>
<div class="a" style="left:1023px;top:209px;width:1px;height:14px;background:#C8DAF0;"></div>
<div class="a" style="left:716px;top:212px;width:1px;height:10px;background:#85788C;"></div>
<div class="a" style="left:717px;top:213px;width:1px;height:10px;background:#FBD8BC;"></div>
<div class="a" style="left:718px;top:212px;width:1px;height:10px;background:#85788C;"></div>
<div class="a" style="left:719px;top:213px;width:1px;height:10px;background:#FBD8BC;"></div>
<div class="a" style="left:720px;top:212px;width:1px;height:10px;background:#85788C;"></div>
<div class="a" style="left:721px;top:213px;width:1px;height:10px;background:#FBD8BC;"></div>
<div class="a" style="left:531px;top:437px;width:19px;height:19px;background:#FFFFFF;border:1px solid #A8A8A8;"></div>
<svg class="a" style="left:531px;top:437px" width="19" height="19" viewBox="0 0 19 19">
<defs><linearGradient id="ga" x1="0" y1="0" x2="1" y2="1"><stop offset="0" stop-color="#8EDA5A"/><stop offset="1" stop-color="#4AA81E"/></linearGradient></defs>
<path d="M2 6 L8.7 6 L8.7 2.7 L18.3 9.7 L8.7 16.9 L8.7 13.8 L2 13.8 Z" fill="url(#ga)"/></svg>
<div class="a" style="left:531px;top:491px;width:21px;height:21px;background:#FFFFFF;"></div>
<div class="a" style="left:531px;top:492px;width:19px;height:19px;background:#FFFFFF;border:1px solid #A8A8A8;"></div>
<svg class="a" style="left:531px;top:492px" width="19" height="19" viewBox="0 0 19 19">
<defs><linearGradient id="gb2" x1="1" y1="0" x2="0" y2="1"><stop offset="0" stop-color="#8EDA5A"/><stop offset="1" stop-color="#4AA81E"/></linearGradient></defs>
<path d="M17.5 6.5 L10.3 6.5 L10.3 2.7 L1.7 9.9 L10.3 16.9 L10.3 13.3 L17.5 13.3 Z" fill="url(#gb2)"/></svg>
<div class="a" style="left:529px;top:489px;width:25px;height:25px;border:2px solid #C0101A;"></div>
<div class="a" style="left:543px;top:512px;width:154px;height:18px;background:#FA9848;border:1px solid #5F86C8;"></div>
<div class="a t " style="left:547px;top:515px;color:#140808;letter-spacing:0.1px">Sync to Billing Order</div>
<div class="a" style="left:668px;top:516px;font-size:10px;line-height:14px;color:#7C80C8;letter-spacing:0.2px">Alt-B</div>
<div class="a" style="left:171px;top:430px;width:300px;height:175px;background:#E99066;border:1px solid #B86A48;"></div>
<div class="a" style="left:179px;top:460px;width:284px;height:137px;background:#FFFFFF;"></div>
<div class="a" style="left:461px;top:461px;width:1px;height:135px;background:#B4B4B4;"></div>
<div class="a" style="left:179px;top:595px;width:283px;height:1px;background:#B4B4B4;"></div>
<div class="a" style="left:179px;top:460px;width:283px;height:1px;background:#B8BEC4;"></div>
<div class="a" style="left:179px;top:460px;width:1px;height:136px;background:#C8CDD2;"></div>
<div class="a" style="left:433px;top:431px;width:31px;height:20px;background:#C74D50;"></div>
<svg class="a" style="left:433px;top:431px" width="31" height="20"><path d="M12 6.5 L19.5 14 M19.5 6.5 L12 14" stroke="#fff" stroke-width="1.7"/></svg>
<svg class="a" style="left:181px;top:437px" width="16" height="16" viewBox="0 0 16 16">
<rect x="0" y="0" width="16" height="16" fill="#C9CDD4"/>
<rect x="0" y="0" width="16" height="2" fill="#3479CC"/><rect x="0" y="14" width="16" height="2" fill="#3479CC"/>
<path d="M2.5 4 L2.5 11.2" stroke="#1A1A1A" stroke-width="1.3"/>
<path d="M1.5 4.3 L4.6 4.3 Q6.6 4.3 6.6 6.2 Q6.6 8.1 4.6 8.1 L2.5 8.1" fill="none" stroke="#1A1A1A" stroke-width="1.1"/>
<path d="M4.2 8.3 L9.8 13.2" stroke="#1A1A1A" stroke-width="1.2"/>
<path d="M10 7 Q10.4 5.6 12 5.6 Q13.7 5.6 13.7 7.1 Q13.7 8.4 12 9.6 L10.2 11 L14.6 11" fill="none" stroke="#2A2A2A" stroke-width="1.1"/>
</svg>
<div class="a" style="left:171px;top:437px;width:300px;text-align:center;font-size:14px;line-height:17px;color:#363636">R2</div>
<div class="a" style="left:197px;top:478px;width:27px;height:27px;background:#9CCB96;border:1px solid #5E8E5A;box-shadow:2px 3px 4px rgba(0,0,0,0.28);"></div>
<svg class="a" style="left:197px;top:478px" width="27" height="27" viewBox="0 0 27 27">
<path d="M9.6 10.8 C9.2 5.8 18.6 5.6 18.4 10.4 C18.3 13 14.6 13.2 14.3 15" fill="none" stroke="#CFF5C2" stroke-width="5.4" stroke-linecap="square" stroke-linejoin="round"/>
<rect x="11" y="16.2" width="5.6" height="6.2" rx="1" fill="#CFF5C2"/>
<path d="M9.6 10.8 C9.2 5.8 18.6 5.6 18.4 10.4 C18.3 13 14.6 13.2 14.3 15" fill="none" stroke="#0B4F0B" stroke-width="3.4" stroke-linecap="square" stroke-linejoin="round"/>
<rect x="12" y="17.2" width="3.6" height="4.2" fill="#0B4F0B"/>
</svg>
<div class="a t " style="left:248px;top:474px;">Select the fields to Sync</div>
<div class="a" style="left:247px;top:522px;width:12px;height:12px;border:1px solid #6E8296;background:linear-gradient(135deg,#FFFFFF 15%,#FFB47A 100%);box-shadow:inset 1px 1px 0 #fff;"></div>
<div class="a" style="left:357px;top:522px;width:12px;height:12px;border:1px solid #6E8296;background:linear-gradient(135deg,#FFFFFF 15%,#FFB47A 100%);box-shadow:inset 1px 1px 0 #fff;"></div>
<div class="a" style="left:263px;top:520px;width:19px;height:17px;border:1px solid #CC4A22;"></div>
<div class="a t " style="left:264px;top:522px;letter-spacing:-1px">Qty</div>
<div class="a t " style="left:374px;top:522px;">Days</div>
<div class="a" style="left:225px;top:555px;width:79px;height:24px;background:#FFFFFF;border:1px solid #A8A8A8;"></div>
<div class="a" style="left:336px;top:555px;width:79px;height:24px;background:#FFFFFF;border:1px solid #A8A8A8;"></div>
<div class="a t " style="left:257px;top:561px;"><u>O</u>K</div>
<div class="a t " style="left:357px;top:561px;"><u>C</u>ancel</div>
<svg class="a" style="left:440px;top:490px" width="92" height="20"><path d="M10 9.4 L90 9.4" stroke="#C8000E" stroke-width="2.1"/>
<path d="M8 9.4 L14.6 6.2 M8 9.4 L14.6 12.6" stroke="#C8000E" stroke-width="2.4" stroke-linecap="round"/></svg>
</body></html>
